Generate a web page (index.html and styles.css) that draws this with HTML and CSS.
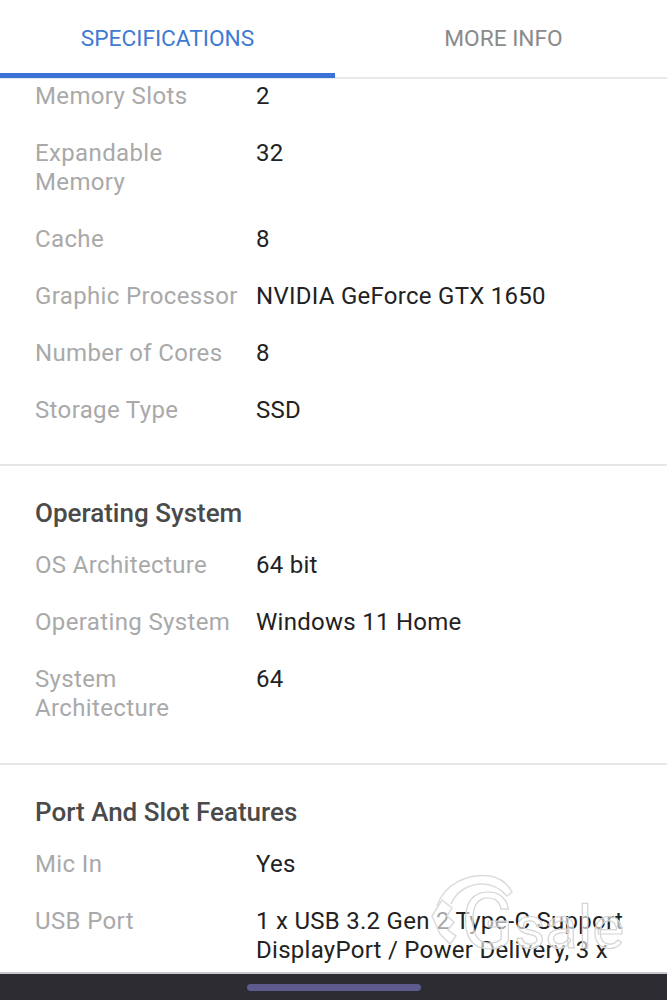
FILE: index.html
```html
<!DOCTYPE html>
<html lang="en">
<head>
<meta charset="utf-8">
<title>Specifications</title>
<link rel="stylesheet" href="styles.css">
</head>
<body>
<div class="screen">
  <nav class="tabs">
    <div class="tab tab-active">SPECIFICATIONS</div>
    <div class="tab tab-other">MORE INFO</div>
  </nav>
  <main class="content">
    <section class="section section-first">
      <div class="row"><div class="label">Memory Slots</div><div class="value">2</div></div>
      <div class="row"><div class="label">Expandable Memory</div><div class="value">32</div></div>
      <div class="row"><div class="label">Cache</div><div class="value">8</div></div>
      <div class="row"><div class="label">Graphic Processor</div><div class="value">NVIDIA GeForce GTX 1650</div></div>
      <div class="row"><div class="label">Number of Cores</div><div class="value">8</div></div>
      <div class="row"><div class="label">Storage Type</div><div class="value">SSD</div></div>
    </section>
    <section class="section section-os">
      <h2 class="heading">Operating System</h2>
      <div class="row"><div class="label">OS Architecture</div><div class="value">64 bit</div></div>
      <div class="row"><div class="label">Operating System</div><div class="value">Windows 11 Home</div></div>
      <div class="row"><div class="label">System Architecture</div><div class="value">64</div></div>
    </section>
    <section class="section">
      <h2 class="heading">Port And Slot Features</h2>
      <div class="row"><div class="label">Mic In</div><div class="value">Yes</div></div>
      <div class="row"><div class="label">USB Port</div><div class="value">1 x USB 3.2 Gen 2 Type-C Support DisplayPort / Power Delivery, 3 x</div></div>
    </section>
  </main>
  <svg class="watermark" viewBox="0 0 210 90" aria-hidden="true">
    <path class="wm-line" d="M9 34 C16 12 40 1 62 4 C72 6 80 12 84 20 L79 24 C72 16 64 12 54 12 C40 12 28 20 23 32"/>
    <path class="wm-line" d="M4 44 L14 28 L24 36 L19 44 L26 50 L20 58 L28 64 L22 72 L12 62 Z"/>
    <text class="wm-text" x="33" y="76"><tspan class="wm-cap">G</tspan>sale</text>
  </svg>
  <footer class="navbar"><span class="handle"></span></footer>
</div>
</body>
</html>
```

FILE: styles.css
```css
* { box-sizing: border-box; }
html, body { margin: 0; padding: 0; }
body { background: #fff; font-family: Roboto, "Liberation Sans", sans-serif; }
.screen { position: relative; width: 667px; height: 1000px; display: flex; flex-direction: column; overflow: hidden; background: #fff; }
.tabs { display: flex; height: 79px; flex: none; border-bottom: 2px solid #e9e9e9; }
.tab { height: 78px; padding-top: 23px; text-align: center; font-size: 22.7px; line-height: 31px; color: #8a8a8a; }
.tab-active { flex: none; width: 335px; color: #3f7ad3; border-bottom: 5px solid #3a72d6; }
.tab-other { flex: 1; padding-left: 5px; }
.content { flex: 1; min-height: 0; overflow: hidden; }
.section { padding: 0 35px 11px; border-bottom: 2px solid #e6e6e6; }
.section-first { padding-top: 3px; }
.section-os { padding-bottom: 12px; }
.heading { margin: 0; padding-top: 31px; padding-bottom: 21px; font-size: 26px; line-height: 33px; font-weight: 500; color: #4a4a4a; }
.row { display: flex; font-size: 24px; line-height: 29px; margin-bottom: 28px; }
.label { width: 221px; flex: none; padding-right: 6px; color: #a9a9a9; letter-spacing: 0.36px; }
.value { flex: 1; color: #222; letter-spacing: 0.27px; }
.watermark { position: absolute; left: 428px; top: 872px; width: 210px; height: 90px; pointer-events: none; }
.wm-line { fill: rgba(255,255,255,.6); stroke: #dcdcdc; stroke-width: 1.5; }
.wm-text { font-family: Roboto, sans-serif; font-size: 60px; fill: rgba(255,255,255,.6); stroke: #d4d4d4; stroke-width: 1.2; }
.wm-cap { font-size: 78px; }
.navbar { flex: none; height: 28px; background: #2c2c32; border-top: 2px solid #c9c9cd; display: flex; justify-content: center; align-items: center; }
.handle { width: 174px; height: 7px; border-radius: 4px; background: #5d5a8e; }
```
